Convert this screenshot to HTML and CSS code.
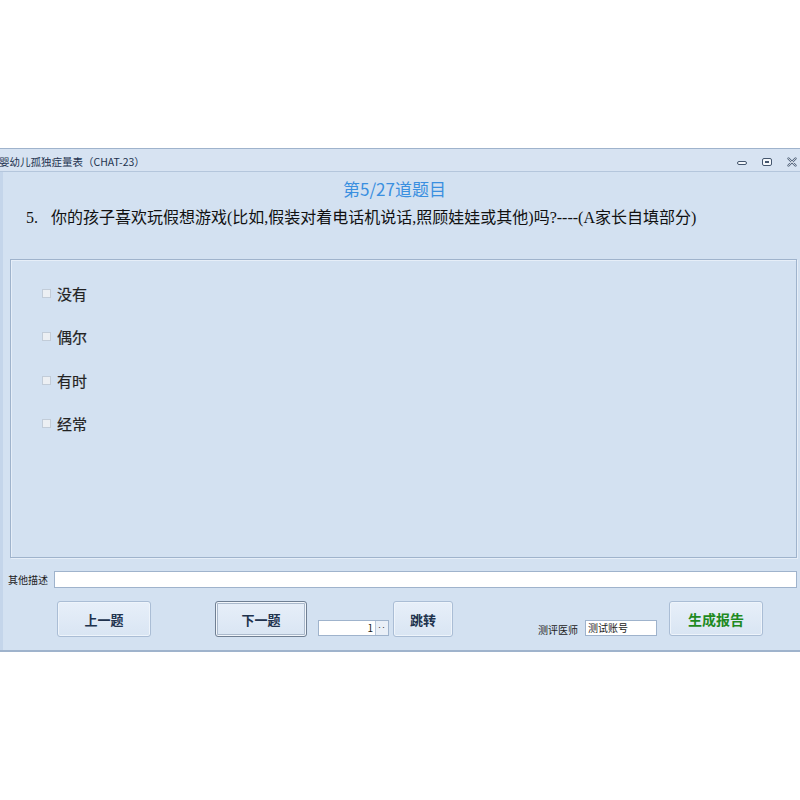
FILE: index.html
```html
<!DOCTYPE html>
<html lang="zh-CN">
<head>
    <meta charset="UTF-8">
    <meta name="viewport" content="width=device-width, initial-scale=1.0">
    <title>婴幼儿孤独症量表（CHAT-23）</title>
    <link rel="stylesheet" href="styles.css">
</head>
<body>
    <div class="window">
        <!-- Title bar -->
        <div class="titlebar">
            <span class="title">婴幼儿孤独症量表（CHAT-23）</span>
            <div class="controls">
                <svg class="ctl" width="12" height="10" viewBox="0 0 12 10">
                    <rect x="1.5" y="4.5" width="9" height="3" rx="1.5" fill="#f4f7fb" stroke="#44566e"/>
                </svg>
                <svg class="ctl" width="12" height="10" viewBox="0 0 12 10">
                    <rect x="1.5" y="1.5" width="9" height="7" rx="1.5" fill="#f4f7fb" stroke="#44566e"/>
                    <rect x="4" y="4" width="4" height="2" fill="#44566e"/>
                </svg>
                <svg class="ctl" width="12" height="10" viewBox="0 0 12 10">
                    <path d="M2.5 1.5 L9.5 8.5 M9.5 1.5 L2.5 8.5" fill="none" stroke="#5a6b82" stroke-width="2.4" stroke-linecap="round"/>
                    <path d="M2.5 1.5 L9.5 8.5 M9.5 1.5 L2.5 8.5" fill="none" stroke="#e9eef5" stroke-width="0.8" stroke-linecap="round"/>
                </svg>
            </div>
        </div>

        <div class="client">
            <h2 class="progress">第5/27道题目</h2>
            <p class="question"><span class="qno">5.</span>你的孩子喜欢玩假想游戏(比如,假装对着电话机说话,照顾娃娃或其他)吗?----(A家长自填部分)</p>

            <!-- Answer options -->
            <div class="groupbox">
                <label class="option"><span class="check"></span>没有</label>
                <label class="option"><span class="check"></span>偶尔</label>
                <label class="option"><span class="check"></span>有时</label>
                <label class="option"><span class="check"></span>经常</label>
            </div>

            <div class="desc-row">
                <span class="desc-label">其他描述</span>
                <div class="textbox desc-input"></div>
            </div>

            <div class="action-row">
                <button class="btn btn-prev">上一题</button>
                <button class="btn btn-next">下一题</button>
                <div class="spin">
                    <span class="spin-value">1</span>
                    <span class="spin-arrows">··</span>
                </div>
                <button class="btn btn-jump">跳转</button>
                <span class="doctor-label">测评医师</span>
                <div class="textbox doctor-input">测试账号</div>
                <button class="btn btn-report">生成报告</button>
            </div>
        </div>
    </div>
</body>
</html>
```

FILE: styles.css
```css
* {
    margin: 0;
    padding: 0;
    box-sizing: border-box;
}

body {
    background-color: #fff;
    font-family: "Noto Sans CJK SC", "Noto Sans", sans-serif;
    color: #1b2a40;
}

/* Window frame */
.window {
    margin-top: 148px;
    width: 800px;
    border-top: 1px solid #9fb3cc;
    border-bottom: 2px solid #9fb3cc;
    background-color: #d3e1f1;
}

.titlebar {
    height: 23px;
    display: flex;
    align-items: center;
    justify-content: space-between;
    background-color: #d7e3f2;
    border-bottom: 1px solid #b4c6dc;
}

.title {
    font-size: 10.5px;
    color: #1e3350;
    margin-left: -1px;
    margin-top: 2px;
}

.controls {
    display: flex;
    gap: 13px;
    margin-right: 2px;
    margin-top: 4px;
}

.ctl {
    display: block;
}

/* Client area */
.client {
    display: flex;
    flex-direction: column;
    padding-bottom: 12px;
    border-left: 3px solid #c4d5ea;
}

.progress {
    margin-top: 6px;
    height: 22px;
    line-height: 22px;
    text-align: center;
    font-size: 17px;
    font-weight: normal;
    color: #3a8fe0;
    margin-left: -14px;
}

.question {
    margin-top: 7px;
    height: 22px;
    line-height: 22px;
    margin-left: 23px;
    font-family: "Liberation Serif", "Noto Sans CJK SC", serif;
    font-size: 16px;
    color: #111;
    white-space: nowrap;
}

.qno {
    display: inline-block;
    width: 25px;
}

.groupbox {
    margin: 30px 3px 0 7px;
    height: 299px;
    border: 1px solid #9fb3cc;
    box-shadow: inset 1px 1px 0 #e6eef8, 1px 1px 0 #e6eef8;
    padding-top: 22px;
    padding-left: 31px;
    display: flex;
    flex-direction: column;
    gap: 21.5px;
}

.option {
    display: flex;
    align-items: center;
    height: 22px;
    font-size: 15px;
    color: #222;
    -webkit-text-stroke: 0.2px #222;
}

.check {
    width: 9px;
    height: 9px;
    margin-right: 6px;
    border: 1px solid #c2ccd8;
    background-color: #eceff3;
}

.desc-row {
    margin-top: 12px;
    display: flex;
    align-items: center;
    height: 18px;
}

.desc-label {
    width: 46px;
    margin-left: 5px;
    font-size: 10px;
    color: #222;
}

.textbox {
    background-color: #fff;
    border: 1px solid #9fb3cc;
    font-size: 10px;
    color: #222;
}

.desc-input {
    width: 743px;
    height: 17px;
}

/* Bottom buttons row */
.action-row {
    margin-top: 13px;
    display: flex;
    align-items: flex-start;
    height: 37px;
}

.btn {
    height: 36px;
    border: 1px solid #aabdd5;
    border-radius: 3px;
    background: linear-gradient(#e7eff9, #d9e5f3);
    box-shadow: inset 0 0 0 1px #eef4fb;
    font-family: "Noto Sans CJK SC", sans-serif;
    font-size: 13px;
    font-weight: bold;
    color: #20324d;
}

.btn-prev {
    width: 94px;
    margin-left: 54px;
}

.btn-next {
    width: 92px;
    margin-left: 64px;
    border-color: #6f7f93;
    box-shadow: inset 0 0 0 1px #f2f6fb, inset 0 0 0 2px #aab9cc;
}

.spin {
    margin-left: 11px;
    margin-top: 19px;
    width: 71px;
    height: 16px;
    display: flex;
    border: 1px solid #9fb3cc;
    background-color: #fff;
}

.spin-value {
    flex: 1;
    text-align: right;
    padding-right: 2px;
    font-size: 10px;
    line-height: 14px;
    color: #222;
}

.spin-arrows {
    width: 13px;
    border-left: 1px solid #b9c8da;
    background-color: #e9eff7;
    font-family: "Liberation Sans", sans-serif;
    font-size: 9px;
    letter-spacing: 1px;
    line-height: 13px;
    text-align: center;
    color: #333;
    overflow: hidden;
}

.btn-jump {
    width: 60px;
    margin-left: 4px;
}

.doctor-label {
    margin-left: 85px;
    margin-top: 21px;
    width: 47px;
    font-size: 10px;
    color: #222;
}

.doctor-input {
    margin-top: 19px;
    width: 72px;
    height: 16px;
    line-height: 14px;
    padding-left: 2px;
}

.btn-report {
    width: 94px;
    height: 35px;
    margin-left: 12px;
    font-size: 14px;
    color: #1f8a1f;
}
```
